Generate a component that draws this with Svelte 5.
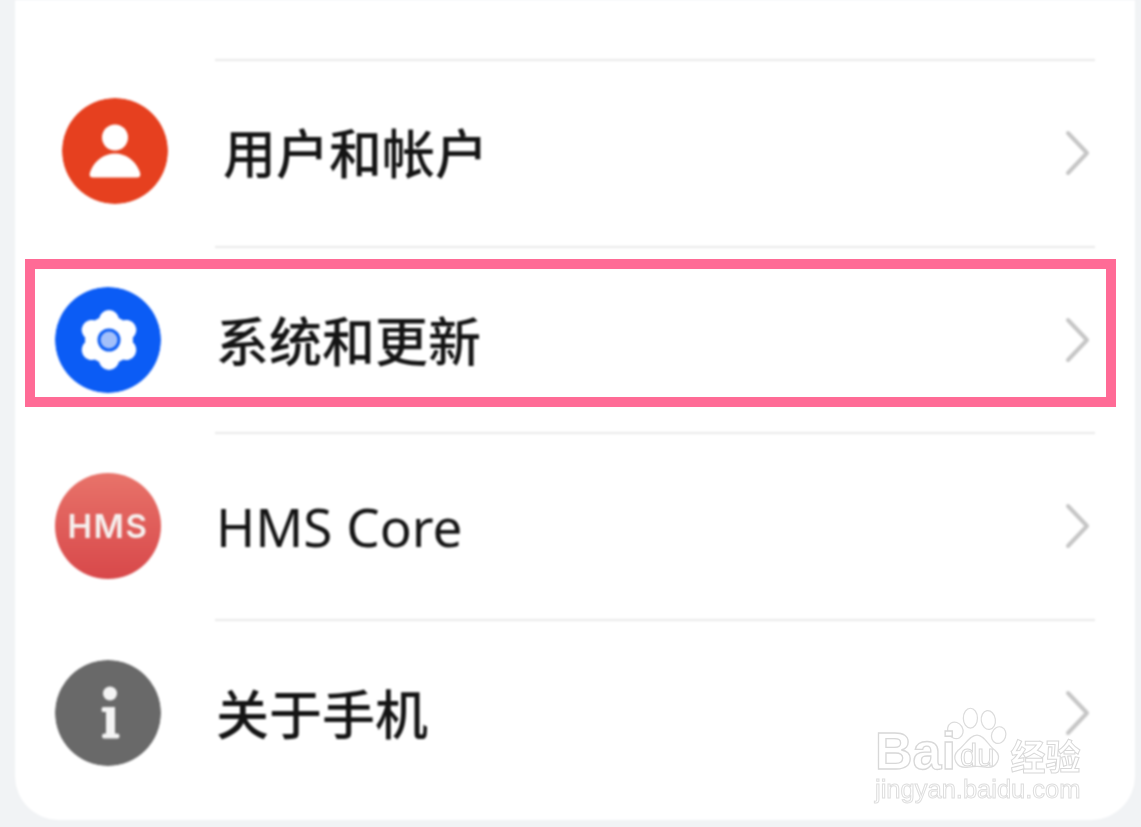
<script lang="ts">
	const rows = [
		{ id: 'user', label: '用户和帐户' },
		{ id: 'system', label: '系统和更新' },
		{ id: 'hms', label: 'HMS Core' },
		{ id: 'about', label: '关于手机' }
	]

	// six lobes of the settings gear
	const lobes = [0, 60, 120, 180, 240, 300]
</script>

<main class="page">
	<section class="card">
		<div class="lead"></div>
		{#each rows as row}
			<div class="row {row.id}">
				{#if row.id === 'user'}
					<svg class="icon" viewBox="0 0 106 106">
						<circle cx="53" cy="53" r="53" fill="#e6401f" />
						<circle cx="53" cy="39.500" r="13" fill="#fff" />
						<path d="M31 79.500 C27 79.500 27 76 29 72 C33 62 43 55.500 53 55.500 C63 55.500 73 62 77 72 C79 76 79 79.500 75 79.500 Z" fill="#fff" />
					</svg>
				{:else if row.id === 'system'}
					<svg class="icon" viewBox="0 0 106 106">
						<circle cx="53" cy="53" r="53" fill="#0b5cf5" />
						<g fill="#fff">
							<circle cx="54" cy="53" r="24" />
							{#each lobes as a}
								<circle cx="54" cy="33" r="10" transform="rotate({a} 54 53)" />
							{/each}
						</g>
						<circle cx="54" cy="53" r="11.500" fill="#0b5cf5" />
						<circle cx="54" cy="53" r="8.500" fill="#a3c0fa" />
					</svg>
				{:else if row.id === 'hms'}
					<div class="icon hms-badge">HMS</div>
				{:else}
					<svg class="icon" viewBox="0 0 106 106">
						<circle cx="53" cy="53" r="53" fill="#696969" />
						<circle cx="55" cy="33.500" r="7" fill="#f4f4f4" />
						<path d="M48 47 H60 V73.500 H62.500 Q64.500 73.500 64.500 76 Q64.500 78.500 62.500 78.500 H49 Q47 78.500 47 76 Q47 73.500 49 73.500 H51 V52 H48 Q46.500 52 46.500 49.500 Q46.500 47 48 47 Z" fill="#f4f4f4" />
					</svg>
				{/if}
				<span class="label">{row.label}</span>
				<svg class="chevron" viewBox="0 0 26 46">
					<path d="M3 3 L22 23 L3 43" />
				</svg>
			</div>
		{/each}
	</section>

	<div class="highlight"></div>

	<div class="watermark">
		<svg class="paw" viewBox="0 0 70 70">
			<g fill="#fff" stroke="#dcdcdc" stroke-width="1.300">
				<ellipse cx="28" cy="15" rx="7.500" ry="10.500" />
				<ellipse cx="47" cy="17" rx="7.500" ry="10" transform="rotate(-8 47 17)" />
				<ellipse cx="12" cy="28" rx="8" ry="9" transform="rotate(-30 12 28)" />
				<ellipse cx="58" cy="33" rx="7.500" ry="9" transform="rotate(20 58 33)" />
				<path d="M35 33 C43 33 47 44 54 49 C62 56 56 69 44 67 C38 66 32 66 26 67 C12 69 8 56 15 49 C22 44 27 33 35 33 Z" />
			</g>
		</svg>
		<div class="mark-top">
			<span class="bai">Bai</span>
			<span class="du">du</span>
			<span class="jy">经验</span>
		</div>
		<div class="mark-url">jingyan.baidu.com</div>
	</div>
</main>

<style>
	:global(body) {
		margin: 0;
		background: #f1f3f5;
	}

	.page {
		position: relative;
		width: 1141px;
		height: 827px;
		overflow: hidden;
		background: #f1f3f5;
		font-family: "Noto Sans CJK SC", "Noto Sans", sans-serif;
		color: #141414;
	}

	.card {
		box-sizing: border-box;
		width: 1120px;
		height: 820px;
		margin-left: 15px;
		padding-bottom: 14px;
		background: #fff;
		border-radius: 0 0 44px 44px;
		filter: blur(0.8px);
	}

	.lead {
		height: 60px;
	}

	.row {
		position: relative;
		display: flex;
		align-items: center;
		box-sizing: border-box;
		height: 186.500px;
		padding-left: 40px;
		padding-right: 44px;
	}

	/* the hairline only runs under the label column */
	.row::before {
		content: "";
		position: absolute;
		top: -1px;
		left: 200px;
		right: 40px;
		height: 2px;
		background: #e9e9e9;
	}

	.icon {
		flex: none;
		width: 106px;
		height: 106px;
		border-radius: 50%;
	}

	.label {
		flex: 1;
		margin-left: 55px;
		margin-top: -2px;
		font-size: 53px;
		font-weight: 500;
		line-height: 60px;
		white-space: nowrap;
	}

	.chevron {
		flex: none;
		width: 26px;
		height: 46px;
		fill: none;
		stroke: #c6c6c6;
		stroke-width: 4;
		stroke-linecap: round;
		stroke-linejoin: round;
	}

	.row.user {
		padding-left: 47px;
	}

	.row.user .label {
		margin-left: 55px;
		margin-top: -4px;
	}

	.row.user .icon {
		margin-top: -4px;
	}

	.row.hms .label {
		margin-top: 2px;
		font-family: "Noto Sans", sans-serif;
		font-size: 53px;
		font-weight: 400;
	}

	.hms-badge {
		display: flex;
		align-items: center;
		justify-content: center;
		background: linear-gradient(#e8736a, #d8484a);
		color: #f6f0ee;
		font-family: Inter, sans-serif;
		font-size: 33px;
		font-weight: 600;
		letter-spacing: 1.500px;
	}

	.highlight {
		position: absolute;
		left: 25px;
		top: 259px;
		box-sizing: border-box;
		width: 1091px;
		height: 148px;
		border: 10px solid #ff6b96;
		filter: blur(0.4px);
	}

	.watermark {
		position: absolute;
		left: 875px;
		top: 704px;
		width: 206px;
		height: 100px;
		font-family: "Liberation Sans", sans-serif;
		color: #fff;
		filter: blur(0.4px);
	}

	.paw {
		position: absolute;
		left: 69px;
		top: 0;
		width: 66px;
		height: 66px;
	}

	.mark-top {
		position: absolute;
		left: 0;
		top: 24px;
		display: flex;
		align-items: baseline;
		height: 46px;
		line-height: 46px;
		white-space: nowrap;
		-webkit-text-stroke: 1.300px #d8d8d8;
	}

	.bai {
		font-size: 52px;
		font-weight: 700;
	}

	.du {
		position: relative;
		top: -3px;
		margin-left: 4px;
		font-size: 31px;
		-webkit-text-stroke-width: 1px;
	}

	.jy {
		position: relative;
		top: 1px;
		margin-left: 16px;
		font-family: "Noto Sans CJK SC", sans-serif;
		font-size: 35px;
		font-weight: 700;
		-webkit-text-stroke-width: 1px;
	}

	.mark-url {
		position: absolute;
		left: 0;
		top: 70px;
		font-size: 25.500px;
		line-height: 30px;
		-webkit-text-stroke: 1px #dedede;
		white-space: nowrap;
	}
</style>
